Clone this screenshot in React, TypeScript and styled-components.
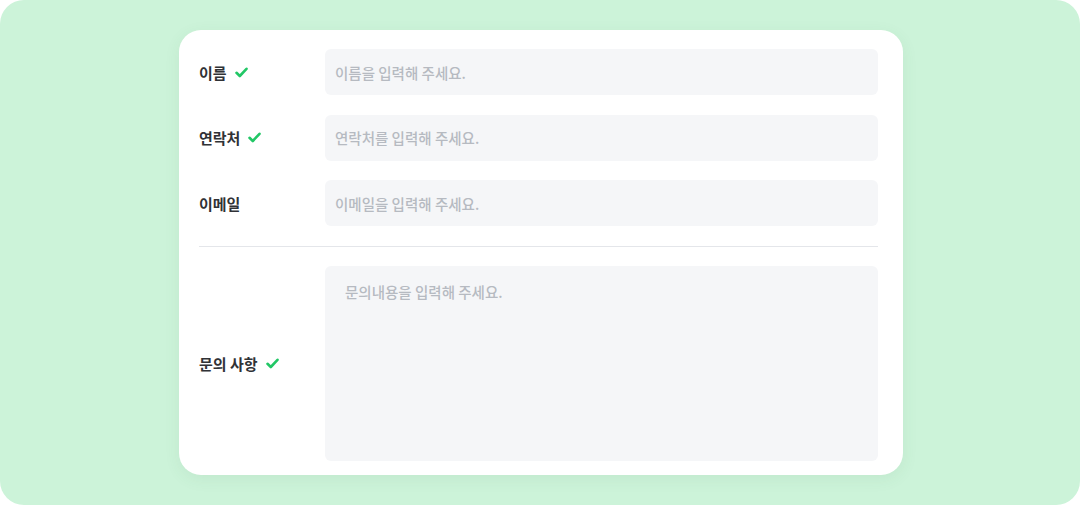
import React from "react";
import styled, { createGlobalStyle } from "styled-components";

const GlobalStyle = createGlobalStyle`
  html, body { margin: 0; padding: 0; background: #ffffff; }
  body { font-family: "Noto Sans CJK KR", "Noto Sans", sans-serif; }
  * { box-sizing: border-box; }
`;

const Stage = styled.div`
  width: 1080px;
  height: 505px;
  background: #ccf3d9;
  border-radius: 24px;
  display: flex;
  align-items: center;
  justify-content: center;
  padding-left: 2px;
`;

const Card = styled.form`
  width: 724px;
  height: 445px;
  background: #ffffff;
  border-radius: 22px;
  box-shadow: 0 4px 16px rgba(60, 120, 80, 0.08);
  padding: 19px 25px 14px 20px;
  display: flex;
  flex-direction: column;
  gap: 19.5px;
`;

const Row = styled.div<{ $tall?: boolean }>`
  display: grid;
  grid-template-columns: 126px 1fr;
  align-items: center;
  flex: none;
  height: ${(p) => (p.$tall ? "195px" : "46px")};
`;

const Label = styled.label`
  display: flex;
  align-items: center;
  gap: 8px;
  font-size: 15px;
  font-weight: 700;
  color: #303236;
  letter-spacing: 0;
`;

const Input = styled.input`
  height: 46px;
  width: 100%;
  border: none;
  outline: none;
  border-radius: 6px;
  background: #f5f6f8;
  padding: 0 10px;
  font-family: inherit;
  font-size: 14.5px;
  color: #2b2d31;
  &::placeholder { color: #b6bac1; font-weight: 500; }
`;

const TextArea = styled.textarea`
  height: 195px;
  width: 100%;
  border: none;
  outline: none;
  resize: none;
  border-radius: 6px;
  background: #f5f6f8;
  padding: 15px 20px;
  font-family: inherit;
  font-size: 14.5px;
  color: #2b2d31;
  &::placeholder { color: #b6bac1; font-weight: 500; }
`;

const Divider = styled.hr`
  margin: 0;
  border: none;
  flex: none;
  height: 1px;
  background: #e4e6ea;
`;

const Check = () => (
  <svg width="13" height="11" viewBox="0 0 13 11" fill="none">
    <path d="M1.5 5.8 L4.8 9 L11.5 1.8" stroke="#22c766" strokeWidth="2.6" strokeLinecap="round" strokeLinejoin="round" />
  </svg>
);

export default function App() {
  return (
    <>
      <GlobalStyle />
      <Stage>
        <Card onSubmit={(e) => e.preventDefault()}>
          <Row>
            <Label>이름 <Check /></Label>
            <Input placeholder="이름을 입력해 주세요." />
          </Row>
          <Row>
            <Label>연락처 <Check /></Label>
            <Input placeholder="연락처를 입력해 주세요." />
          </Row>
          <Row>
            <Label>이메일</Label>
            <Input placeholder="이메일을 입력해 주세요." />
          </Row>
          <Divider />
          <Row $tall>
            <Label>문의 사항 <Check /></Label>
            <TextArea placeholder="문의내용을 입력해 주세요." />
          </Row>
        </Card>
      </Stage>
    </>
  );
}
